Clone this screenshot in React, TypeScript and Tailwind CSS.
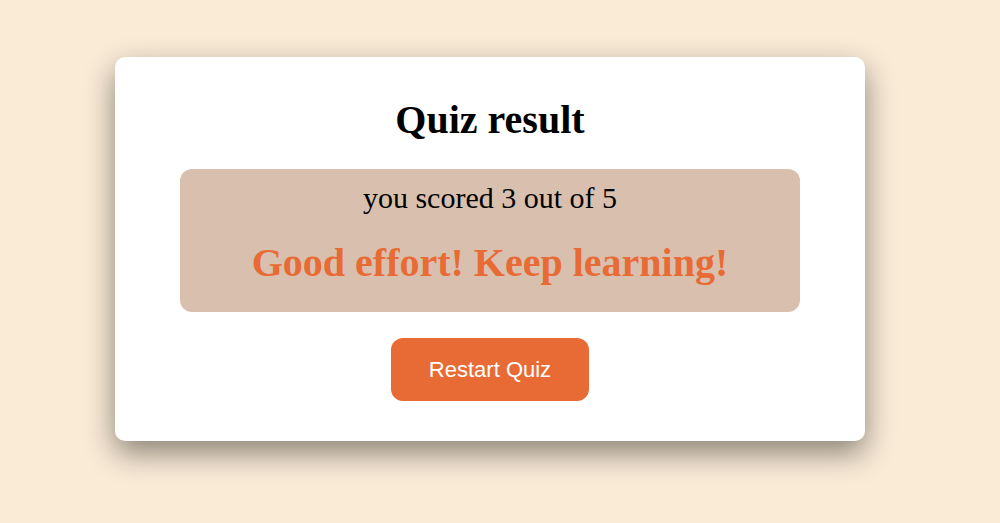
export default function App() {
  return (
    <div className="min-h-[523px] w-full bg-[#faebd7] pt-[57px]" style={{ fontFamily: '"Liberation Serif", "Times New Roman", serif' }}>
      <div className="ml-[115px] flex w-[750px] flex-col items-center rounded-[10px] bg-white px-[65px] pt-[41px] pb-[40px] shadow-[0_12px_30px_rgba(0,0,0,0.45)]">
        <h1 className="text-[40px] leading-[44px] font-bold text-black">Quiz result</h1>
        <div className="mt-[27px] flex w-[620px] flex-col items-center rounded-[12px] bg-[#d9c0ae] pt-[12px] pb-[27px]">
          <p className="text-[30px] leading-[33px] text-black">you scored 3 out of 5</p>
          <p className="mt-[27px] text-[40px] leading-[44px] font-bold text-[#e86b35]">Good effort! Keep learning!</p>
        </div>
        <button
          className="mt-[26px] flex h-[63px] w-[198px] items-center justify-center rounded-[12px] bg-[#e86b35] text-[22px] text-white"
          style={{ fontFamily: '"Liberation Sans", Arial, sans-serif' }}
        >
          Restart Quiz
        </button>
      </div>
    </div>
  );
}
